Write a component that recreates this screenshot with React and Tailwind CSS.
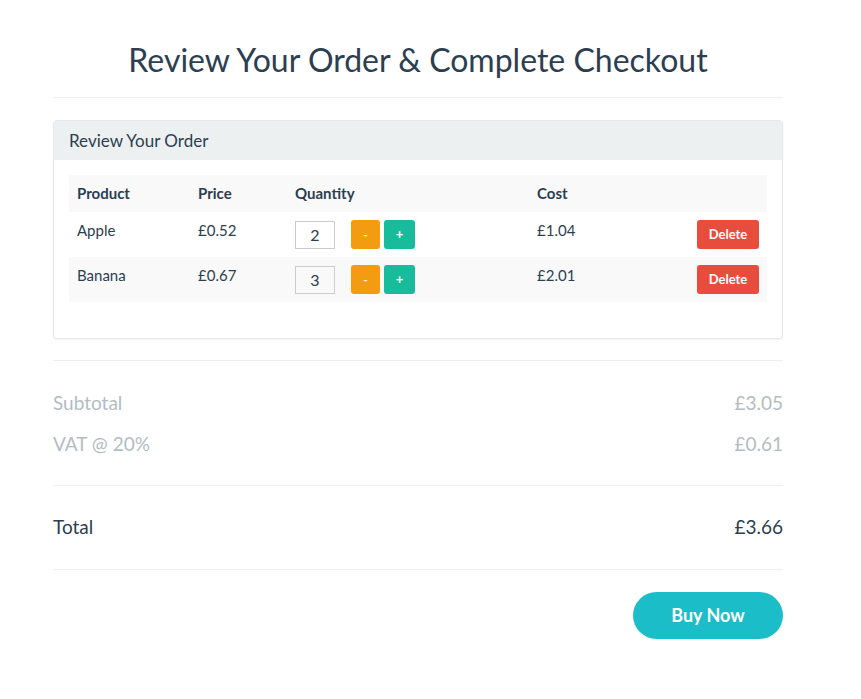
export default function App() {
  const rows = [
    { name: "Apple", price: "£0.52", qty: 2, cost: "£1.04", striped: false },
    { name: "Banana", price: "£0.67", qty: 3, cost: "£2.01", striped: true },
  ];
  return (
    <div className="min-h-[699px] bg-white text-[#2c3e50]" style={{ fontFamily: "Lato, 'Open Sans', sans-serif" }}>
      <div className="ml-[53px] w-[730px] pt-[38px]">
        <h1 className="text-center text-[32px] leading-[44px] font-normal">Review Your Order &amp; Complete Checkout</h1>
        <div className="mt-[15px] h-px bg-[#ecf0f1]"></div>
        <div className="mt-[22px] rounded border border-[#e5e9ea] shadow-[0_1px_2px_rgba(0,0,0,0.05)] overflow-hidden">
          <div className="h-[39px] bg-[#ecf0f1] px-[15px] flex items-center text-[17px]">Review Your Order</div>
          <div className="px-[15px] pt-[15px] pb-[36px]">
            <table className="w-full border-collapse text-[15px]">
              <thead>
                <tr className="bg-[#f9f9f9] h-[37px]">
                  <th className="text-left font-bold px-2 w-[121px]">Product</th>
                  <th className="text-left font-bold px-2 w-[97px]">Price</th>
                  <th className="text-left font-bold px-2 w-[242px]">Quantity</th>
                  <th className="text-left font-bold px-2">Cost</th>
                  <th className="px-2"></th>
                </tr>
              </thead>
              <tbody>
                {rows.map((r) => (
                  <tr key={r.name} className={r.striped ? "bg-[#f9f9f9] h-[45px]" : "h-[45px]"}>
                    <td className="px-2 align-top pt-[7px]">{r.name}</td>
                    <td className="px-2 align-top pt-[7px]">{r.price}</td>
                    <td className="px-2 align-top pt-[8px]">
                      <div className="flex items-center">
                        <div className="w-[40px] h-[28px] border border-[#cccccc] flex items-center justify-center text-[16px]">{r.qty}</div>
                        <button className="ml-[16px] w-[29px] h-[29px] rounded-[3px] bg-[#f39c12] text-white text-[12px] font-bold">-</button>
                        <button className="ml-[4px] w-[31px] h-[29px] rounded-[3px] bg-[#18bc9c] text-white text-[13px] font-bold">+</button>
                      </div>
                    </td>
                    <td className="px-2 align-top pt-[7px]">{r.cost}</td>
                    <td className="px-2 align-top pt-[8px] text-right">
                      <button className="w-[62px] h-[29px] rounded-[3px] bg-[#e74c3c] text-white text-[13px] font-bold">Delete</button>
                    </td>
                  </tr>
                ))}
              </tbody>
            </table>
          </div>
        </div>
        <div className="mt-[21px] h-px bg-[#ecf0f1]"></div>
        <div className="pt-[29px] pb-[13px] text-[#b4bcc2] text-[19px]">
          <div className="flex justify-between h-[41px] items-start leading-[26px]"><span>Subtotal</span><span>£3.05</span></div>
          <div className="flex justify-between h-[41px] items-start leading-[26px]"><span>VAT @ 20%</span><span>£0.61</span></div>
        </div>
        <div className="h-px bg-[#ecf0f1]"></div>
        <div className="flex justify-between items-center h-[83px] text-[19px]"><span>Total</span><span>£3.66</span></div>
        <div className="h-px bg-[#ecf0f1]"></div>
        <div className="flex justify-end mt-[22px]">
          <button className="w-[150px] h-[47px] rounded-full bg-[#1bbdc8] text-white text-[18px] font-bold">Buy Now</button>
        </div>
      </div>
    </div>
  );
}
